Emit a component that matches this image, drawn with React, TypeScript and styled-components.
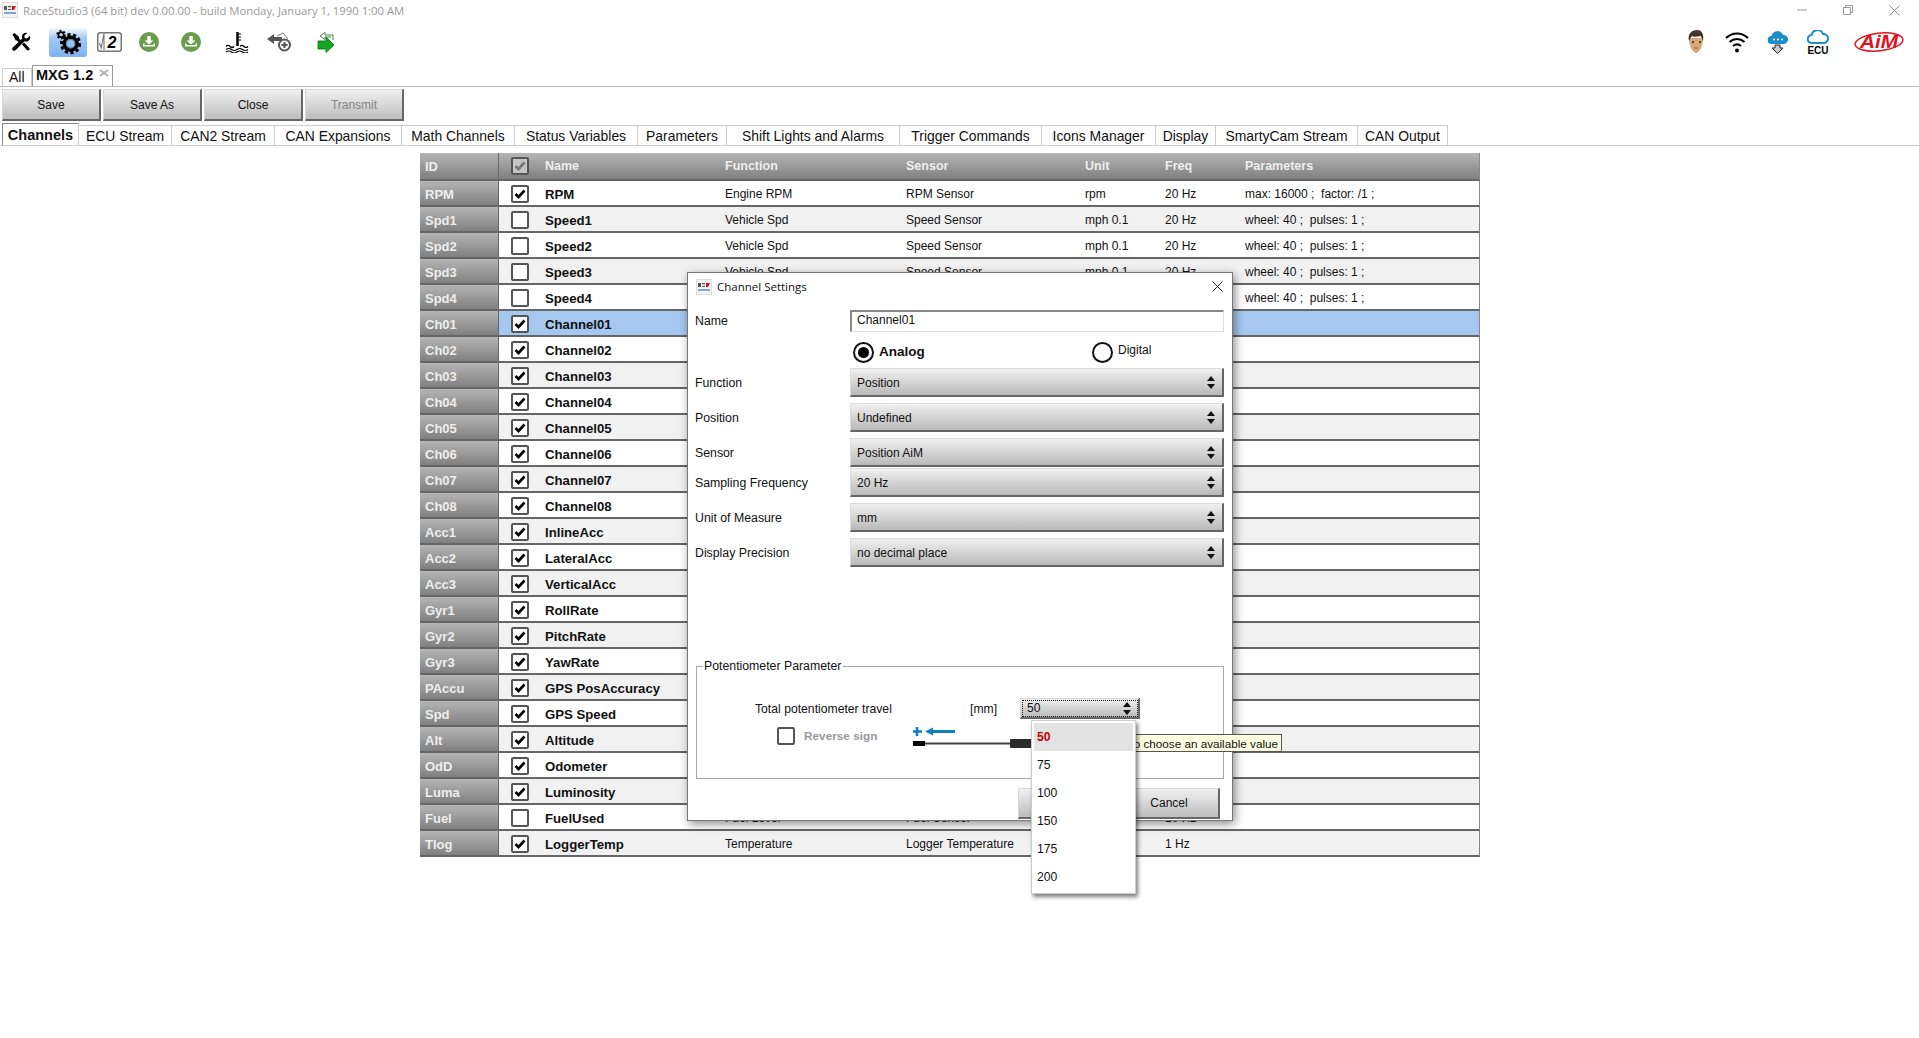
import React from "react";
import styled, { createGlobalStyle } from "styled-components";

const GlobalStyle = createGlobalStyle`
  html, body {
    margin: 0;
    padding: 0;
    background: #fff;
  }
  body {
    font-family: "Liberation Sans", Arial, sans-serif;
    color: #111;
    overflow: hidden;
  }
`;

type Channel = {
  id: string;
  on: boolean;
  name: string;
  fn?: string;
  sensor?: string;
  unit?: string;
  freq?: string;
  params?: string;
};

const channels: Channel[] = [
  { id: "RPM", on: true, name: "RPM", fn: "Engine RPM", sensor: "RPM Sensor", unit: "rpm", freq: "20 Hz", params: "max: 16000 ;  factor: /1 ;" },
  { id: "Spd1", on: false, name: "Speed1", fn: "Vehicle Spd", sensor: "Speed Sensor", unit: "mph 0.1", freq: "20 Hz", params: "wheel: 40 ;  pulses: 1 ;" },
  { id: "Spd2", on: false, name: "Speed2", fn: "Vehicle Spd", sensor: "Speed Sensor", unit: "mph 0.1", freq: "20 Hz", params: "wheel: 40 ;  pulses: 1 ;" },
  { id: "Spd3", on: false, name: "Speed3", fn: "Vehicle Spd", sensor: "Speed Sensor", unit: "mph 0.1", freq: "20 Hz", params: "wheel: 40 ;  pulses: 1 ;" },
  { id: "Spd4", on: false, name: "Speed4", params: "wheel: 40 ;  pulses: 1 ;" },
  { id: "Ch01", on: true, name: "Channel01" },
  { id: "Ch02", on: true, name: "Channel02" },
  { id: "Ch03", on: true, name: "Channel03" },
  { id: "Ch04", on: true, name: "Channel04" },
  { id: "Ch05", on: true, name: "Channel05" },
  { id: "Ch06", on: true, name: "Channel06" },
  { id: "Ch07", on: true, name: "Channel07" },
  { id: "Ch08", on: true, name: "Channel08" },
  { id: "Acc1", on: true, name: "InlineAcc" },
  { id: "Acc2", on: true, name: "LateralAcc" },
  { id: "Acc3", on: true, name: "VerticalAcc" },
  { id: "Gyr1", on: true, name: "RollRate" },
  { id: "Gyr2", on: true, name: "PitchRate" },
  { id: "Gyr3", on: true, name: "YawRate" },
  { id: "PAccu", on: true, name: "GPS PosAccuracy" },
  { id: "Spd", on: true, name: "GPS Speed" },
  { id: "Alt", on: true, name: "Altitude" },
  { id: "OdD", on: true, name: "Odometer" },
  { id: "Luma", on: true, name: "Luminosity" },
  { id: "Fuel", on: false, name: "FuelUsed", fn: "Fuel Level", sensor: "Fuel Sensor", freq: "10 Hz" },
  { id: "Tlog", on: true, name: "LoggerTemp", fn: "Temperature", sensor: "Logger Temperature", freq: "1 Hz" },
];

const pageTabs: [string, number][] = [
  ["Channels", 77],
  ["ECU Stream", 93],
  ["CAN2 Stream", 103],
  ["CAN Expansions", 127],
  ["Math Channels", 113],
  ["Status Variables", 123],
  ["Parameters", 89],
  ["Shift Lights and Alarms", 173],
  ["Trigger Commands", 142],
  ["Icons Manager", 114],
  ["Display", 60],
  ["SmartyCam Stream", 142],
  ["CAN Output", 90],
];

const App = () => {
  return (
    <Page>
      <GlobalStyle />
      <TitleBar>
        <AppLogo />
        <TitleText>RaceStudio3 (64 bit) dev 0.00.00 - build Monday, January 1, 1990 1:00 AM</TitleText>
        <WindowControls>
          <svg width="10" height="10" viewBox="0 0 10 10"><path d="M0 5h10" stroke="#999" /></svg>
          <svg width="10" height="10" viewBox="0 0 10 10" fill="none" stroke="#999"><path d="M.5 2.5h7v7h-7zM2.5 2.5v-2h7v7h-2" /></svg>
          <svg width="11" height="11" viewBox="0 0 11 11" stroke="#888"><path d="M.5.5l10 10M10.5.5l-10 10" /></svg>
        </WindowControls>
      </TitleBar>

      <Toolbar>
        <ToolGroup>
          <ToolSlot $w={42}><ToolsIcon /></ToolSlot>
          <ToolSlot $w={38} $active><GearsIcon /></ToolSlot>
          <ToolSlot $w={44}><SqrtIcon /></ToolSlot>
          <ToolSlot $w={36}><DownloadIcon /></ToolSlot>
          <ToolSlot $w={48}><DownloadIcon /></ToolSlot>
          <ToolSlot $w={44}><SeaIcon /></ToolSlot>
          <ToolSlot $w={40}><BackPlusIcon /></ToolSlot>
          <ToolSlot $w={54}><GreenArrowIcon /></ToolSlot>
        </ToolGroup>
        <StatusGroup>
          <ToolSlot $w={41}><FaceIcon /></ToolSlot>
          <ToolSlot $w={41}><WifiIcon /></ToolSlot>
          <ToolSlot $w={41}><CloudDownIcon /></ToolSlot>
          <ToolSlot $w={40}><CloudEcuIcon /></ToolSlot>
          <AimSlot><AimLogo /></AimSlot>
        </StatusGroup>
      </Toolbar>

      <DeviceTabs>
        <AllTab>All</AllTab>
        <DeviceTab>
          MXG 1.2
          <svg width="10" height="8" viewBox="0 0 10 8" stroke="#aaa" strokeWidth="1.6"><path d="M1 1l8 6M9 1L1 7" /></svg>
        </DeviceTab>
      </DeviceTabs>

      <ActionRow>
        <ActionButton>Save</ActionButton>
        <ActionButton>Save As</ActionButton>
        <ActionButton>Close</ActionButton>
        <ActionButton $disabled>Transmit</ActionButton>
      </ActionRow>

      <PageTabs>
        {pageTabs.map(([label, width], i) => (
          <PageTab key={label} $w={width} $active={i === 0}>{label}</PageTab>
        ))}
      </PageTabs>

      <Table>
        <HeaderRow>
          <IdCell>ID</IdCell>
          <CheckCell><CheckBox $state="header"><CheckMark color="#777" /></CheckBox></CheckCell>
          <span>Name</span>
          <span>Function</span>
          <span>Sensor</span>
          <span>Unit</span>
          <span>Freq</span>
          <span>Parameters</span>
        </HeaderRow>
        {channels.map((c, i) => (
          <Row key={c.id} $odd={i % 2 === 1} $selected={c.id === "Ch01"}>
            <IdCell>{c.id}</IdCell>
            <CheckCell><CheckBox>{c.on && <CheckMark color="#000" />}</CheckBox></CheckCell>
            <NameCell>{c.name}</NameCell>
            <span>{c.fn}</span>
            <span>{c.sensor}</span>
            <span>{c.unit}</span>
            <span>{c.freq}</span>
            <span>{c.params}</span>
          </Row>
        ))}
      </Table>

      <Dialog>
        <DialogHeader>
          <AppLogo />
          <DialogTitle>Channel Settings</DialogTitle>
          <svg width="11" height="11" viewBox="0 0 11 11" stroke="#222"><path d="M.5.5l10 10M10.5.5l-10 10" /></svg>
        </DialogHeader>

        <NameRow>
          <FieldLabel>Name</FieldLabel>
          <NameInput>Channel01</NameInput>
        </NameRow>

        <RadioRow>
          <RadioOption $w={239}>
            <Radio $checked />
            <RadioLabel $bold>Analog</RadioLabel>
          </RadioOption>
          <RadioOption $w={130}>
            <Radio />
            <RadioLabel>Digital</RadioLabel>
          </RadioOption>
        </RadioRow>

        <SelectRow $gap={5}>
          <FieldLabel>Function</FieldLabel>
          <Select>Position<UpDown /></Select>
        </SelectRow>
        <SelectRow $gap={6}>
          <FieldLabel>Position</FieldLabel>
          <Select>Undefined<UpDown /></Select>
        </SelectRow>
        <SelectRow $gap={6}>
          <FieldLabel>Sensor</FieldLabel>
          <Select>Position AiM<UpDown /></Select>
        </SelectRow>
        <SelectRow $gap={1}>
          <FieldLabel>Sampling Frequency</FieldLabel>
          <Select>20 Hz<UpDown /></Select>
        </SelectRow>
        <SelectRow $gap={6}>
          <FieldLabel>Unit of Measure</FieldLabel>
          <Select>mm<UpDown /></Select>
        </SelectRow>
        <SelectRow $gap={6}>
          <FieldLabel>Display Precision</FieldLabel>
          <Select>no decimal place<UpDown /></Select>
        </SelectRow>

        <ParamBox>
          <ParamLegend>Potentiometer Parameter</ParamLegend>
          <TravelRow>
            <TravelLabel>Total potentiometer travel</TravelLabel>
            <TravelUnit>[mm]</TravelUnit>
            <SmallSelectWrap>
              <SmallSelect>50<UpDown /></SmallSelect>
              <Dropdown>
                <DropItem $current>50</DropItem>
                <DropItem>75</DropItem>
                <DropItem>100</DropItem>
                <DropItem>150</DropItem>
                <DropItem>175</DropItem>
                <DropItem>200</DropItem>
              </Dropdown>
            </SmallSelectWrap>
          </TravelRow>
          <ReverseRow>
            <CheckBox />
            <ReverseLabel>Reverse sign</ReverseLabel>
            <PotIcon />
          </ReverseRow>
        </ParamBox>

        <DialogButtons>
          <DialogButton>OK</DialogButton>
          <DialogButton>Cancel</DialogButton>
        </DialogButtons>

        <Tooltip>Click to choose an available value</Tooltip>
      </Dialog>
    </Page>
  );
};

export default App;

/* ---------- drawn icons ---------- */

const AppLogo = () => (
  <svg width="16" height="16" viewBox="0 0 16 16">
    <rect x=".5" y=".5" width="15" height="15" fill="#f4f4f4" stroke="#ddd" />
    <path d="M2 4h3v4H2zM6 4h3v1.300H6zM6 7h3v1H6z" fill="#555" />
    <path d="M10 4h4l-2 4h-2z" fill="#d0121a" />
    <path d="M2 11h12" stroke="#5b8fc7" strokeWidth="1.500" />
  </svg>
);

const ToolsIcon = () => (
  <svg width="20" height="20" viewBox="0 0 20 20" fill="#000">
    <path d="M1.500 2.500l2-1.500 4.500 3.800v1.700l2.500 2.500-2 2-2.500-2.500H4.800z" />
    <path d="M19 3.500l-3 3-2.300-.4-.4-2.300 3-2.900c-2.600-.8-5.400 1-5.400 3.800 0 .7.100 1.300.4 1.800L2 15.200c-1 1-1 2.300-.2 3 .8.800 2 .7 3-.2l8.700-8.800c.6.300 1.200.4 1.800.4 2.900 0 4.600-2.900 3.700-5.600z" />
    <path d="M11 12.500l2-2 5 5.300c.8.900.8 1.700.2 2.300-.6.600-1.500.6-2.300-.2z" />
  </svg>
);

const GearsIcon = () => (
  <svg width="26" height="26" viewBox="0 0 30 30" fill="none" stroke="#000">
    <circle cx="18" cy="17" r="7.500" strokeWidth="4" />
    <circle cx="18" cy="17" r="10.500" strokeWidth="3.500" strokeDasharray="3.600 2.900" />
    <circle cx="18" cy="17" r="4.800" stroke="#4d6f8f" strokeWidth="1" />
    <circle cx="7" cy="6.500" r="3" strokeWidth="2" />
    <circle cx="7" cy="6.500" r="4.500" strokeWidth="2" strokeDasharray="2.200 2.500" />
  </svg>
);

const SqrtIcon = () => (
  <svg width="25" height="20" viewBox="0 0 25 20">
    <rect x=".75" y=".75" width="23.500" height="18.500" rx="2.500" fill="#fff" stroke="#777" strokeWidth="1.500" />
    <path d="M2.500 11l1.700 5L7 1.500M7 1.500V18" fill="none" stroke="#777" strokeWidth="1.100" />
    <text x="10.500" y="15.500" fontFamily="Liberation Sans" fontStyle="italic" fontWeight="700" fontSize="16" fill="#000">2</text>
  </svg>
);

const DownloadIcon = () => (
  <svg width="20" height="20" viewBox="0 0 20 20">
    <circle cx="10" cy="10" r="10" fill="#6a9c4e" />
    <path d="M8.300 4h3.400v4.500h2.800L10 12.500 5.500 8.500h2.800z" fill="#fff" />
    <path d="M4 11.500v3h12v-3h-1.600v1.500H5.600v-1.500z" fill="#fff" />
  </svg>
);

const SeaIcon = () => (
  <svg width="24" height="22" viewBox="0 0 24 22" fill="none" stroke="#000">
    <path d="M12.500 1v14" strokeWidth="2.500" />
    <path d="M13.500 3h2.500M13.500 6h2.500M13.500 9h2.500" strokeWidth="1" />
    <path d="M1 15.500q2-2 4 0t4 0M15 15.500q2-2 4 0t4 0M1 18.500q2.750-2 5.500 0t5.500 0 5.500 0 5.500 0M1 21q2.750-2 5.500 0t5.500 0 5.500 0 5.500 0" strokeWidth="1.200" />
  </svg>
);

const BackPlusIcon = () => (
  <svg width="24" height="20" viewBox="0 0 24 20">
    <path d="M0 7l7-5v3h8v4H7v3z" fill="#555" />
    <path d="M10 4l6-3 5 6" fill="none" stroke="#777" />
    <circle cx="17.500" cy="13" r="5.500" fill="#fff" stroke="#555" strokeWidth="2" />
    <path d="M14.500 13h6M17.500 10v6" stroke="#555" strokeWidth="2" />
  </svg>
);

const GreenArrowIcon = () => (
  <svg width="18" height="22" viewBox="0 0 18 22">
    <path d="M1 10h8V6l8 8-8 7.500V18H1z" fill="#12a820" stroke="#0a6d14" strokeWidth=".8" />
    <path d="M16 9V4H8V1.500L3 5l5 3.500V6h6" fill="#fff" stroke="#2d7a32" strokeWidth=".9" />
  </svg>
);

const FaceIcon = () => (
  <svg width="18" height="24" viewBox="0 0 18 24">
    <path d="M2 8c0 8 3 14 7 15 4-1 7-7 7-15z" fill="#d9a878" />
    <path d="M2 11C0 3 6 0 10 0c5 0 7 4 6 11-1-3-2-5-3-5-3 1-7 1-8 0-1 1-2 3-3 5z" fill="#4b3229" />
    <circle cx="6" cy="12" r="1" fill="#222" />
    <circle cx="13" cy="12" r="1" fill="#222" />
    <path d="M7 18h4" stroke="#8f5f45" />
  </svg>
);

const WifiIcon = () => (
  <svg width="24" height="22" viewBox="0 0 24 22" fill="none" stroke="#000" strokeWidth="2">
    <path d="M1 7c6.500-6 15.500-6 22 0M4.500 11c4.500-4 10.500-4 15 0M8 15c2.500-2 5.500-2 8 0" />
    <circle cx="12" cy="19.500" r="2" fill="#000" stroke="none" />
  </svg>
);

const CloudDownIcon = () => (
  <svg width="22" height="24" viewBox="0 0 22 24">
    <path d="M5 14a4 4 0 0 1-.5-8A6 6 0 0 1 16 5a4.500 4.500 0 0 1 1 9z" fill="#1b8ec9" />
    <circle cx="7" cy="9.500" r="1" fill="#fff" />
    <circle cx="11" cy="9.500" r="1" fill="#fff" />
    <circle cx="15" cy="9.500" r="1" fill="#fff" />
    <path d="M8 15h5v3h3l-5.500 5.500L5 18h3z" fill="#ccc" stroke="#222" />
  </svg>
);

const CloudEcuIcon = () => (
  <svg width="22" height="24" viewBox="0 0 22 24">
    <path d="M5 13a4 4 0 0 1-.5-8A6 6 0 0 1 16 4a4.500 4.500 0 0 1 1 9z" fill="#fff" stroke="#1b8ec9" strokeWidth="2" />
    <text x="11" y="23.500" textAnchor="middle" fontFamily="Liberation Sans" fontWeight="700" fontSize="10" fill="#000">ECU</text>
  </svg>
);

const AimLogo = () => (
  <svg width="50" height="22" viewBox="0 0 50 22">
    <ellipse cx="25" cy="11" rx="24" ry="8.800" transform="rotate(-6 25 11)" fill="none" stroke="#e2121d" strokeWidth="1.500" />
    <text x="6" y="17" textLength="38" lengthAdjust="spacingAndGlyphs" fontFamily="Liberation Sans" fontStyle="italic" fontWeight="700" fontSize="19" fill="#e2121d">AiM</text>
  </svg>
);

const CheckMark = ({ color }: { color: string }) => (
  <svg width="14" height="14" viewBox="0 0 14 14" fill="none" stroke={color} strokeWidth="2.600">
    <path d="M2.500 7l3 3 6-6.500" />
  </svg>
);

const UpDown = () => (
  <UpDownSvg width="8" height="13" viewBox="0 0 8 13" fill="#111">
    <path d="M4 0l4 5H0zM0 8h8l-4 5z" />
  </UpDownSvg>
);

const PotIcon = () => (
  <PotSvg width="120" height="24" viewBox="0 0 120 24">
    <path d="M4 1v9M0 5.500h9" stroke="#0f7fc1" strokeWidth="2.600" />
    <path d="M12 5.500l8-4v2.500h22v3H20v2.500z" fill="#0f7fc1" />
    <rect x="0" y="15" width="12" height="5" fill="#000" />
    <rect x="12" y="16.500" width="86" height="2" fill="#444" />
    <rect x="97" y="13" width="23" height="9" rx="1" fill="#2c2c2c" />
  </PotSvg>
);

/* ---------- page chrome ---------- */

const Page = styled.div`
  position: relative;
  width: 1919px;
  height: 1038px;
  overflow: hidden;
  background: #fff;
`;

const TitleBar = styled.div`
  display: flex;
  align-items: center;
  height: 20px;
  padding-left: 2px;
`;

const TitleText = styled.span`
  margin-left: 5px;
  font-family: "Open Sans", sans-serif;
  font-size: 11.300px;
  color: #999;
  white-space: nowrap;
`;

const WindowControls = styled.div`
  display: flex;
  align-items: center;
  gap: 36px;
  margin-left: auto;
  padding-right: 19px;
`;

const Toolbar = styled.div`
  display: flex;
  justify-content: space-between;
  align-items: center;
  height: 44px;
`;

const ToolGroup = styled.div`
  display: flex;
  align-items: center;
`;

const StatusGroup = styled.div`
  display: flex;
  align-items: center;
  padding-right: 15px;
`;

const ToolSlot = styled.div<{ $w: number; $active?: boolean }>`
  display: flex;
  align-items: center;
  justify-content: center;
  width: ${(p) => p.$w}px;
  height: 30px;
  ${(p) =>
    p.$active &&
    `
    margin-left: 7px;
    border-radius: 3px;
    background: linear-gradient(#ffffff, #a5cbf5 35%, #7db2ef);
  `}
`;

const AimSlot = styled.div`
  display: flex;
  margin-left: 16px;
`;

const DeviceTabs = styled.div`
  display: flex;
  align-items: flex-end;
  box-sizing: border-box;
  height: 23px;
  padding-left: 2px;
  border-bottom: 1px solid #bbb;
`;

const AllTab = styled.div`
  width: 30px;
  height: 18px;
  box-sizing: border-box;
  padding: 0 0 0 6px;
  border: 1px solid #ccc;
  border-bottom: none;
  font-size: 14px;
`;

const DeviceTab = styled.div`
  display: flex;
  align-items: flex-start;
  gap: 6px;
  width: 81px;
  height: 21px;
  box-sizing: border-box;
  padding: 1px 0 0 3px;
  border: 1px solid #999;
  border-bottom: none;
  background: #fff;
  font-size: 14.500px;
  font-weight: 700;

  svg {
    margin-top: 2px;
  }
`;

const ActionRow = styled.div`
  display: flex;
  gap: 2px;
  height: 32px;
  margin-top: 2px;
  padding-left: 2px;
`;

const ActionButton = styled.div<{ $disabled?: boolean }>`
  display: flex;
  align-items: center;
  justify-content: center;
  width: 99px;
  box-sizing: border-box;
  border: 1px solid #d8d8d8;
  border-right: 2px solid #666;
  border-bottom: 2px solid #666;
  background: linear-gradient(#f1f1f1, #bdbdbd);
  font-size: 12px;
  color: ${(p) => (p.$disabled ? "#888" : "#111")};
`;

const PageTabs = styled.div`
  display: flex;
  align-items: flex-end;
  box-sizing: border-box;
  height: 22px;
  margin-top: 3px;
  padding-left: 2px;
  border-bottom: 1px solid #ccc;
`;

const PageTab = styled.div<{ $w: number; $active?: boolean }>`
  display: flex;
  align-items: center;
  justify-content: center;
  width: ${(p) => p.$w}px;
  height: ${(p) => (p.$active ? 22 : 20)}px;
  box-sizing: border-box;
  border: 1px solid #ccc;
  border-left: ${(p) => (p.$active ? "1px solid #888" : "none")};
  border-top-color: ${(p) => (p.$active ? "#888" : "#ccc")};
  border-bottom: none;
  font-size: ${(p) => (p.$active ? 14.500 : 13.900)}px;
  font-weight: ${(p) => (p.$active ? 700 : 400)};
  white-space: nowrap;
`;

/* ---------- channels table ---------- */

const Table = styled.div`
  width: 1060px;
  margin: 7px 0 0 420px;
`;

const rowGrid = `
  display: grid;
  grid-template-columns: 79px 46px 180px 181px 179px 80px 80px 1fr;
  align-items: center;
  box-sizing: border-box;
  height: 26px;
  border-right: 1px solid #888;
  border-bottom: 2px solid #666;
  font-size: 12px;
  white-space: pre;
`;

const HeaderRow = styled.div`
  ${rowGrid}
  height: 28px;
  background: linear-gradient(#b5b5b5, #808080);
  font-weight: 700;
  font-size: 12.500px;
  color: #eee;
`;

const Row = styled.div<{ $odd: boolean; $selected: boolean }>`
  ${rowGrid}
  background: ${(p) => (p.$selected ? "#a6c8f0" : p.$odd ? "#f1f1f1" : "#fff")};

  > * {
    padding-top: 2px;
  }
`;

const IdCell = styled.div`
  display: flex;
  align-items: center;
  align-self: stretch;
  box-sizing: border-box;
  padding-left: 5px;
  background: linear-gradient(#b5b5b5, #808080);
  border-right: 1px solid #666;
  font-size: 13px;
  font-weight: 700;
  color: #eee;
`;

const CheckCell = styled.div`
  display: flex;
  align-items: center;
  padding-left: 12px;
`;

const CheckBox = styled.span<{ $state?: "header" }>`
  display: flex;
  align-items: center;
  justify-content: center;
  flex: none;
  width: 18px;
  height: 18px;
  box-sizing: border-box;
  border: 2px solid #555;
  border-radius: 2px;
  background: ${(p) => (p.$state === "header" ? "#c4c4c4" : "#fff")};
`;

const NameCell = styled.span`
  font-size: 13.200px;
  font-weight: 700;
`;

/* ---------- channel settings dialog ---------- */

const Dialog = styled.div`
  position: absolute;
  left: 687px;
  top: 272px;
  width: 546px;
  height: 549px;
  box-sizing: border-box;
  border: 1px solid #777;
  background: #fff;
  box-shadow: 2px 3px 9px rgba(0, 0, 0, 0.45);
  font-size: 12px;
`;

const DialogHeader = styled.div`
  display: flex;
  align-items: center;
  height: 27px;
  padding: 0 9px 0 8px;
`;

const DialogTitle = styled.span`
  flex: 1;
  margin-left: 5px;
  font-family: "Open Sans", sans-serif;
  font-size: 11.500px;
`;

const FieldLabel = styled.span`
  font-size: 12.300px;
`;

const formGrid = `
  display: grid;
  grid-template-columns: 155px 374px;
  align-items: center;
  padding-left: 7px;
`;

const NameRow = styled.div`
  ${formGrid}
  margin-top: 10px;
  height: 22px;
`;

const NameInput = styled.div`
  display: flex;
  align-items: center;
  height: 22px;
  box-sizing: border-box;
  padding: 0 0 3px 5px;
  border: 1px solid #ddd;
  border-top: 2px solid #888;
  border-left: 2px solid #888;
`;

const RadioRow = styled.div`
  display: flex;
  height: 21px;
  margin-top: 10px;
  padding-left: 165px;
`;

const RadioOption = styled.div<{ $w: number }>`
  display: flex;
  align-items: center;
  gap: 5px;
  width: ${(p) => p.$w}px;
`;

const Radio = styled.span<{ $checked?: boolean }>`
  display: flex;
  align-items: center;
  justify-content: center;
  width: 21px;
  height: 21px;
  box-sizing: border-box;
  border: 2px solid #111;
  border-radius: 50%;

  &::after {
    content: "";
    display: ${(p) => (p.$checked ? "block" : "none")};
    width: 11px;
    height: 11px;
    border-radius: 50%;
    background: #000;
  }
`;

const RadioLabel = styled.span<{ $bold?: boolean }>`
  font-size: ${(p) => (p.$bold ? 13.500 : 12)}px;
  font-weight: ${(p) => (p.$bold ? 700 : 400)};
  margin-top: ${(p) => (p.$bold ? -2 : -5)}px;
`;

const SelectRow = styled.div<{ $gap: number }>`
  ${formGrid}
  margin-top: ${(p) => p.$gap}px;
`;

const selectFace = `
  display: flex;
  align-items: center;
  justify-content: space-between;
  box-sizing: border-box;
  border-top: 1px solid #dcdcdc;
  border-left: 1px solid #dcdcdc;
  border-right: 2px solid #666;
  border-bottom: 2px solid #666;
  background: linear-gradient(#f0f0f0, #b9b9b9);
  font-size: 12px;
`;

const Select = styled.div`
  ${selectFace}
  height: 29px;
  padding: 1px 7px 0 6px;
`;

const UpDownSvg = styled.svg`
  flex: none;
`;

const ParamBox = styled.fieldset`
  width: 528px;
  height: 120px;
  box-sizing: border-box;
  margin: 92px 0 0 8px;
  padding: 0;
  border: 1px solid #aaa;
`;

const ParamLegend = styled.legend`
  margin-left: 6px;
  padding: 0 2px 0 1px;
  font-size: 12.300px;
  line-height: 14px;
`;

const TravelRow = styled.div`
  display: flex;
  align-items: center;
  height: 21px;
  margin-top: 25px;
  padding-left: 58px;
  font-size: 12.200px;
`;

const TravelLabel = styled.span`
  width: 215px;
`;

const TravelUnit = styled.span`
  width: 50px;
`;

const SmallSelectWrap = styled.div`
  position: relative;
  width: 120px;
`;

const SmallSelect = styled.div`
  ${selectFace}
  height: 21px;
  padding: 0 7px 0 6px;
  outline: 1px dotted #222;
  outline-offset: -3px;
`;

const Dropdown = styled.div`
  position: absolute;
  z-index: 3;
  left: 11px;
  top: 22px;
  width: 105px;
  height: 174px;
  box-sizing: border-box;
  padding: 2px 2px 0;
  border: 1px solid #ccc;
  background: #fff;
  box-shadow: 2px 3px 4px rgba(0, 0, 0, 0.5);
`;

const DropItem = styled.div<{ $current?: boolean }>`
  display: flex;
  align-items: center;
  height: 28px;
  padding-left: 3px;
  background: ${(p) => (p.$current ? "#e3e3e3" : "transparent")};
  color: ${(p) => (p.$current ? "#c80000" : "#111")};
  font-weight: ${(p) => (p.$current ? 700 : 400)};
`;

const ReverseRow = styled.div`
  display: flex;
  align-items: center;
  height: 18px;
  margin-top: 8px;
  padding-left: 80px;
`;

const ReverseLabel = styled.span`
  width: 109px;
  margin-left: 9px;
  font-size: 11.800px;
  font-weight: 700;
  color: #999;
`;

const PotSvg = styled.svg`
  flex: none;
  margin-top: 4px;
`;

const DialogButtons = styled.div`
  display: flex;
  justify-content: flex-end;
  margin-top: 9px;
  padding-right: 12px;
`;

const DialogButton = styled.div`
  display: flex;
  align-items: center;
  justify-content: center;
  width: 101px;
  height: 31px;
  box-sizing: border-box;
  border: 1px solid #d8d8d8;
  border-right: 2px solid #666;
  border-bottom: 2px solid #666;
  background: linear-gradient(#f1f1f1, #bdbdbd);
`;

const Tooltip = styled.div`
  position: absolute;
  z-index: 2;
  top: 461px;
  right: -50px;
  height: 18px;
  box-sizing: border-box;
  padding: 0 3px;
  border: 1px solid #555;
  background: #ffffe1;
  font-size: 11.700px;
  line-height: 17px;
  white-space: nowrap;
`;
